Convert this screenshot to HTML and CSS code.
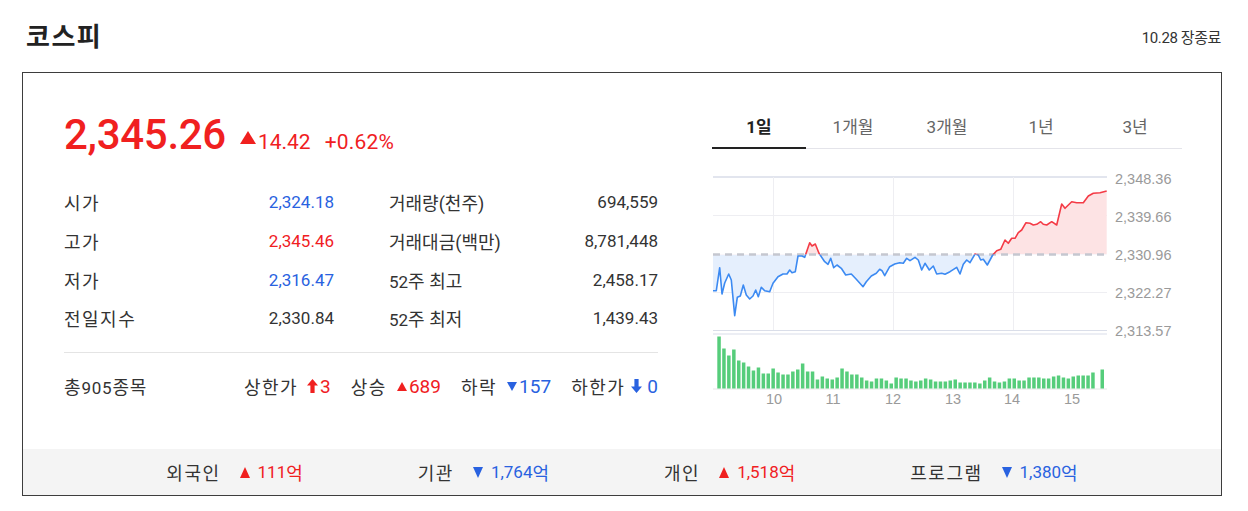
FILE: index.html
```html
<!DOCTYPE html>
<html lang="ko">
<head>
<meta charset="utf-8">
<title>코스피</title>
<link rel="stylesheet" href="styles.css">
</head>
<body>
<div class="page">
  <header class="top">
    <h1 class="title">코스피</h1>
    <span class="status">10.28 장종료</span>
  </header>

  <section class="card">
    <div class="card-body">
      <div class="summary">
        <div class="price-row">
          <span class="price">2,345.26</span>
          <span class="tri-up tri-big"></span>
          <span class="chg">14.42</span>
          <span class="rate">+0.62%</span>
        </div>

        <div class="stats">
          <div class="stat"><span class="lbl ko">시가</span><span class="val blue">2,324.18</span></div>
          <div class="stat"><span class="lbl">거래량(천주)</span><span class="val">694,559</span></div>
          <div class="stat"><span class="lbl ko">고가</span><span class="val red">2,345.46</span></div>
          <div class="stat"><span class="lbl">거래대금(백만)</span><span class="val">8,781,448</span></div>
          <div class="stat"><span class="lbl ko">저가</span><span class="val blue">2,316.47</span></div>
          <div class="stat"><span class="lbl"><span class="num">52</span>주 최고</span><span class="val">2,458.17</span></div>
          <div class="stat"><span class="lbl ko">전일지수</span><span class="val">2,330.84</span></div>
          <div class="stat"><span class="lbl"><span class="num">52</span>주 최저</span><span class="val">1,439.43</span></div>
        </div>

        <div class="divider"></div>

        <div class="breadth">
          <span class="total">총<span class="num">905</span>종목</span>
          <div class="breadth-items">
            <span class="bitem"><span class="ko">상한가</span><svg class="arrow" viewBox="0 0 11 14" width="11" height="14"><path d="M5.5 0 L11 6.5 H7.6 V14 H3.4 V6.5 H0 Z" fill="#f0201f"/></svg><span class="bnum red">3</span></span>
            <span class="bitem"><span class="ko">상승</span><span class="tri-up tri-sm"></span><span class="bnum red">689</span></span>
            <span class="bitem"><span class="ko">하락</span><span class="tri-down tri-sm"></span><span class="bnum blue">157</span></span>
            <span class="bitem"><span class="ko">하한가</span><svg class="arrow arrow-dn" viewBox="0 0 11 14" width="11" height="14"><path d="M5.5 14 L11 7.5 H7.6 V0 H3.4 V7.5 H0 Z" fill="#2962e0"/></svg><span class="bnum blue">0</span></span>
          </div>
        </div>
      </div>

      <div class="chart-panel">
        <ul class="tabs">
          <li class="tab active">1일</li>
          <li class="tab">1개월</li>
          <li class="tab">3개월</li>
          <li class="tab">1년</li>
          <li class="tab">3년</li>
        </ul>
        <svg class="chart" id="chart" viewBox="712 149 466 262" width="466" height="262" xmlns="http://www.w3.org/2000/svg">
          <defs>
            <clipPath id="above"><rect x="712" y="149" width="400" height="105.5"/></clipPath>
            <clipPath id="below"><rect x="712" y="254.5" width="400" height="120"/></clipPath>
          </defs>
          <g class="grid">
            <line x1="713" y1="177" x2="1107" y2="177" class="g-top"/>
            <line x1="713" y1="215.5" x2="1107" y2="215.5"/>
            <line x1="713" y1="292.5" x2="1107" y2="292.5"/>
            <line x1="773.5" y1="177" x2="773.5" y2="331"/>
            <line x1="893.5" y1="177" x2="893.5" y2="331"/>
            <line x1="1013.5" y1="177" x2="1013.5" y2="331"/>
            <line x1="713" y1="330.5" x2="1107" y2="330.5" class="g-bot"/>
            <line x1="713" y1="334" x2="1107" y2="334" class="g-bot"/>
            <line x1="713" y1="389" x2="1107" y2="389" class="g-base"/>
          </g>
          <g id="area">
            <path id="areaPath" class="area-up" clip-path="url(#above)" d=""/>
            <path id="areaPath2" class="area-down" clip-path="url(#below)" d=""/>
          </g>
          <line x1="713" y1="254.5" x2="1107" y2="254.5" class="baseline"/>
          <path id="lineUp" class="line-up" clip-path="url(#above)" d=""/>
          <path id="lineDown" class="line-down" clip-path="url(#below)" d=""/>
          <g id="bars"></g>
          <g class="ylab">
            <text x="1115" y="179">2,348.36</text>
            <text x="1115" y="216.5">2,339.66</text>
            <text x="1115" y="254.5">2,330.96</text>
            <text x="1115" y="292.5">2,322.27</text>
            <text x="1115" y="331">2,313.57</text>
          </g>
          <g class="xlab">
            <text x="774" y="399">10</text>
            <text x="833" y="399">11</text>
            <text x="893" y="399">12</text>
            <text x="953" y="399">13</text>
            <text x="1012" y="399">14</text>
            <text x="1072" y="399">15</text>
          </g>
        </svg>
      </div>
    </div>

    <div class="card-foot">
      <span class="fitem"><span class="ko">외국인</span><span class="tri-up tri-ft"></span><span class="num red">111</span><span class="red">억</span></span>
      <span class="fitem"><span class="ko">기관</span><span class="tri-down tri-ft"></span><span class="num blue">1,764</span><span class="blue">억</span></span>
      <span class="fitem"><span class="ko">개인</span><span class="tri-up tri-ft"></span><span class="num red">1,518</span><span class="red">억</span></span>
      <span class="fitem"><span class="ko">프로그램</span><span class="tri-down tri-ft"></span><span class="num blue">1,380</span><span class="blue">억</span></span>
    </div>
  </section>
</div>
<script src="chart.js"></script>
</body>
</html>
```

FILE: styles.css
```css
* { box-sizing: border-box; margin: 0; padding: 0; }

body {
  font-family: Roboto, "Noto Sans CJK KR", sans-serif;
  color: #222;
  background: #fff;
}

.page { width: 1248px; }

.top {
  height: 72px;
  padding: 17px 27px 0 26px;
  display: flex;
  justify-content: space-between;
  align-items: flex-start;
}

.title {
  font-family: "Noto Sans CJK KR", sans-serif;
  font-size: 26px;
  font-weight: 700;
  line-height: 36px;
  color: #222;
  letter-spacing: 1.5px;
}

.status {
  margin-top: 11px;
  font-size: 15px;
  line-height: 20px;
  color: #333;
  letter-spacing: -0.4px;
}

.card {
  margin-left: 22px;
  width: 1200px;
  border: 1px solid #3d3d3d;
}

.card-body {
  height: 376px;
  padding: 0 39px 0 41px;
  display: flex;
  gap: 54px;
}

.summary { width: 594px; }

.red { color: #f0201f; }
.blue { color: #2962e0; }

.num { font-size: 17px; }

.ko { letter-spacing: 1.5px; }

.price-row {
  margin-top: 37px;
  height: 50px;
  display: flex;
  align-items: baseline;
  color: #f0201f;
}

.price {
  font-size: 42px;
  line-height: 50px;
  font-weight: 500;
  letter-spacing: -0.3px;
}

.tri-up, .tri-down {
  display: inline-block;
  width: 0;
  height: 0;
}
.tri-up {
  border-left: 5px solid transparent;
  border-right: 5px solid transparent;
  border-bottom: 9px solid #f0201f;
}
.tri-down {
  border-left: 5px solid transparent;
  border-right: 5px solid transparent;
  border-top: 9px solid #2962e0;
}

.tri-big {
  margin-left: 14px;
  border-left-width: 8px;
  border-right-width: 8px;
  border-bottom-width: 13px;
  align-self: center;
  margin-top: 4px;
}

.chg {
  margin-left: 2px;
  font-size: 21px;
}

.rate {
  margin-left: 14px;
  font-size: 21px;
  letter-spacing: 0.2px;
}

.stats {
  margin-top: 23px;
  display: grid;
  grid-template-columns: 270px 269px;
  column-gap: 55px;
  grid-auto-rows: 38.7px;
}

.stat {
  display: flex;
  justify-content: space-between;
  align-items: center;
  font-size: 18px;
  color: #333;
}

.stat .val { font-size: 17px; }

.divider {
  margin-top: 14.6px;
  height: 1px;
  background: #e4e4e4;
}

.breadth {
  margin-top: 14px;
  height: 38px;
  display: flex;
  justify-content: space-between;
  align-items: center;
  font-size: 18px;
  color: #333;
}

.total { letter-spacing: 0.8px; }

.breadth-items {
  display: flex;
  gap: 20px;
  align-items: center;
}

.bitem {
  display: inline-flex;
  align-items: center;
}

.bnum { font-size: 19px; }

.arrow { margin: 0 2px 0 9px; }
.arrow-dn { margin: 0 5px 0 6px; }

.tri-sm { margin: 0 2px 0 10px; }

.chart-panel { width: 470px; }

.tabs {
  list-style: none;
  margin-top: 35px;
  height: 41px;
  display: flex;
  border-bottom: 1px solid #e4e4ea;
}

.tab {
  flex: 1;
  text-align: center;
  font-size: 17px;
  line-height: 38px;
  color: #666;
}

.tab.active {
  font-weight: 700;
  color: #222;
  border-bottom: 2px solid #222;
  margin-bottom: -1px;
}

.chart { display: block; }

.grid line { stroke: #eeeef2; stroke-width: 1; }
.grid .g-top { stroke: #e2e5ee; stroke-width: 2; }
.grid .g-bot { stroke: #dadee9; stroke-width: 1.2; }
.grid .g-base { stroke: #e6e6e6; stroke-width: 1; }

.baseline {
  stroke: #c5c7d0;
  stroke-width: 2.5;
  stroke-dasharray: 7 5;
}

.area-up { fill: #fde3e4; }
.area-down { fill: #e5effd; }

.line-up, .line-down {
  fill: none;
  stroke-width: 1.6;
  stroke-linejoin: round;
}
.line-up { stroke: #f43b46; }
.line-down { stroke: #3c8af2; }

#bars rect { fill: #56cd7b; }

.ylab text, .xlab text {
  font-family: "Liberation Sans", Arial, sans-serif;
  font-size: 14.5px;
  fill: #9a9a9a;
  dominant-baseline: central;
}
.xlab text { text-anchor: middle; }

.card-foot {
  height: 46px;
  background: #f4f4f4;
  display: flex;
  justify-content: center;
  align-items: center;
  gap: 115px;
  font-size: 18px;
  color: #333;
}

.fitem {
  display: inline-flex;
  align-items: center;
}

.tri-ft {
  margin: 0 8px 0 19px;
  border-left-width: 5px;
  border-right-width: 5px;
}
.tri-up.tri-ft { border-bottom-width: 11px; }
.tri-down.tri-ft { border-top-width: 11px; }
```

FILE: chart.js
```js
(function () {
  var pts = [
    [713,290.7],[716.3,290.7],[719.7,267.7],[722,294],[724.7,283],[728.7,274],[731.3,280],[734.7,315.7],
    [737.3,297.3],[740.3,296],[743.3,285],[746.3,295],[749.7,299],[753,296],[755.7,290],[758.3,296.7],
    [761.3,287.3],[764.7,290.7],[769.7,291.7],[773,283.3],[778,276.7],[783,274],[787,274],[789.7,270],
    [792,272.7],[795.3,271.7],[798,256],[802,256],[804.7,257.3],[809.7,242.7],[812,246],[815.3,244],
    [819,253.3],[824.7,261.7],[828,264.3],[830.7,258.3],[833.7,267.7],[837,265],[841.3,268.3],[845.7,275],
    [851.3,274],[856.3,279.3],[863,286.7],[866.3,281.7],[871.3,276],[876.3,273.3],[879.7,269.3],[882,270.7],
    [884.7,275.7],[889.7,266.7],[894.7,264],[899.7,262.7],[903.3,263.3],[906.7,258.3],[910,260.7],[915,257.3],
    [918.3,260],[921.7,270],[925,263.3],[929.3,270],[933.3,266],[936.7,274],[941.7,273.3],[945,274.3],
    [950,271.7],[956.7,267.3],[960,274],[963.3,264.3],[966.7,260],[970,262.7],[975,254],[978.3,255],
    [980.7,260],[983.3,259.3],[987.3,265],[990,260],[992.7,255],[996.7,250.7],[1000.7,249.3],[1005,240],
    [1008.3,243.3],[1011.7,238.3],[1015,238.3],[1018.3,232.7],[1021.7,230],[1026,222.7],[1030,223.3],
    [1033.3,225],[1036.7,224.3],[1040.7,221.7],[1043.3,224.3],[1046.7,225],[1051.7,221.7],[1056.7,225],
    [1061.7,204],[1065,208.3],[1071.7,201.7],[1076.7,202.7],[1083.3,202.7],[1088.3,196],[1093.3,193.3],
    [1100,192.7],[1106.7,191]
  ];
  var line = 'M' + pts.map(function (p) { return p[0] + ',' + p[1]; }).join(' L');
  var area = 'M713,254.5 L' + pts.map(function (p) { return p[0] + ',' + p[1]; }).join(' L') + ' L1106.7,254.5 Z';
  document.getElementById('lineUp').setAttribute('d', line);
  document.getElementById('lineDown').setAttribute('d', line);
  document.getElementById('areaPath').setAttribute('d', area);
  document.getElementById('areaPath2').setAttribute('d', area);

  var h = [52,40,33,39,28,26,22,18,21,15,15,20,16,14,14,17,19,25,17,17,9,12,10,9,11,20,17,14,14,11,8,7,10,10,8,5,11,10,
           10,8,7,8,10,9,7,7,7,8,9,6,6,6,6,5,8,11,7,6,7,10,10,8,8,11,11,11,10,10,12,13,11,10,12,13,13,13,16];
  var g = document.getElementById('bars');
  var ns = 'http://www.w3.org/2000/svg';
  function bar(x, hh) {
    var r = document.createElementNS(ns, 'rect');
    r.setAttribute('x', x.toFixed(1));
    r.setAttribute('y', (388.5 - hh).toFixed(1));
    r.setAttribute('width', '3.5');
    r.setAttribute('height', hh);
    g.appendChild(r);
  }
  for (var i = 0; i < h.length; i++) bar(717.3 + i * 4.92, h[i]);
  bar(1100.5, 19);
})();
```
